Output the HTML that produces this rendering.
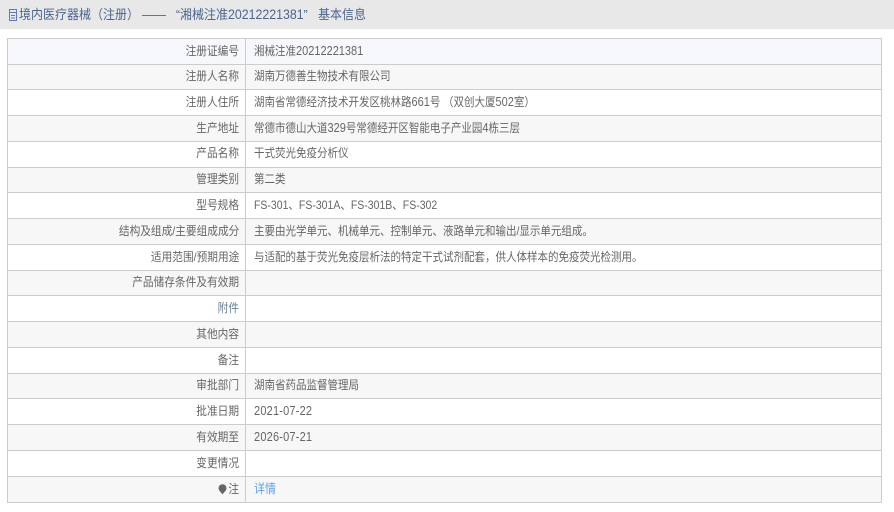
<!DOCTYPE html>
<html lang="zh">
<head>
<meta charset="utf-8">
<style>
html,body{margin:0;padding:0;background:#fff;width:894px;height:512px;overflow:hidden}
body{position:relative;font-family:"Liberation Sans","Noto Sans CJK SC",sans-serif;font-size:12px;color:#666}
#hd{position:absolute;left:0;top:0;width:894px;height:29px;background:#e8e8e8}
.h{position:absolute;top:7px;line-height:16px;white-space:nowrap;color:#4a6590;font-size:13px;transform:scaleX(.923);transform-origin:left center}
#ic{position:absolute;left:8px;top:9px}
.t{position:absolute;white-space:nowrap;line-height:16px}
.k{right:655px;font-size:12px;transform:scaleX(.89);transform-origin:right center}
.v{left:254px;font-size:12px;transform:scaleX(.875);transform-origin:left center}
.n{font-size:12.57px}
.g{position:absolute;left:8px;width:873px;background:#f7f7f7}
.b{position:absolute;left:7px;width:875px;height:1px;background:#ccc}
</style>
</head>
<body>
<div id="hd"></div>
<svg id="ic" width="10" height="12" viewBox="0 0 10 12"><path d="M1.500.500h7v11h-7zM1.500 3.500h7M3 6.500h4M3 9h4" fill="none" stroke="#5f78c0"/></svg>
<div class="h" style="left:19px">境内医疗器械（注册）</div>
<div class="h" style="left:142px">——</div>
<div class="h" style="left:176px">“湘械注准<span style="font-size:13.4px">20212221381</span>”</div>
<div class="h" style="left:318px">基本信息</div>

<div style="position:absolute;left:7px;top:38px;width:875px;height:465px;box-sizing:border-box;border:1px solid #ccc;border-bottom-width:2px;background:#fff"></div>
<div class="g" style="top:39px;height:25px;background:#f6f8fc"></div>
<div class="g" style="top:65px;height:24px"></div>
<div class="g" style="top:116px;height:25px"></div>
<div class="g" style="top:168px;height:24px"></div>
<div class="g" style="top:219px;height:25px"></div>
<div class="g" style="top:271px;height:24px"></div>
<div class="g" style="top:322px;height:25px"></div>
<div class="g" style="top:374px;height:24px"></div>
<div class="g" style="top:425px;height:25px"></div>
<div class="g" style="top:477px;height:25px"></div>

<div style="position:absolute;left:245px;top:38px;width:1px;height:464px;background:#ccc"></div>
<div class="b" style="top:64px"></div>
<div class="b" style="top:89px"></div>
<div class="b" style="top:115px"></div>
<div class="b" style="top:141px"></div>
<div class="b" style="top:167px"></div>
<div class="b" style="top:192px"></div>
<div class="b" style="top:218px"></div>
<div class="b" style="top:244px"></div>
<div class="b" style="top:270px"></div>
<div class="b" style="top:295px"></div>
<div class="b" style="top:321px"></div>
<div class="b" style="top:347px"></div>
<div class="b" style="top:373px"></div>
<div class="b" style="top:398px"></div>
<div class="b" style="top:424px"></div>
<div class="b" style="top:450px"></div>
<div class="b" style="top:476px"></div>

<div class="t k" style="top:43px">注册证编号</div>
<div class="t v" style="top:43px">湘械注准<span class="n">20212221381</span></div>
<div class="t k" style="top:68px">注册人名称</div>
<div class="t v" style="top:68px">湖南万德善生物技术有限公司</div>
<div class="t k" style="top:94px">注册人住所</div>
<div class="t v" style="top:94px">湖南省常德经济技术开发区桃林路<span class="n">661</span>号<span style="margin-left:3px">（</span>双创大厦<span class="n">502</span>室）</div>
<div class="t k" style="top:120px">生产地址</div>
<div class="t v" style="top:120px">常德市德山大道<span class="n">329</span>号常德经开区智能电子产业园<span class="n">4</span>栋三层</div>
<div class="t k" style="top:145px">产品名称</div>
<div class="t v" style="top:145px">干式荧光免疫分析仪</div>
<div class="t k" style="top:171px">管理类别</div>
<div class="t v" style="top:171px">第二类</div>
<div class="t k" style="top:197px">型号规格</div>
<div class="t v" style="top:197px">FS-301、FS-301A、FS-301B、FS-302</div>
<div class="t k" style="top:223px">结构及组成/主要组成成分</div>
<div class="t v" style="top:223px">主要由光学单元、机械单元、控制单元、液路单元和输出/显示单元组成。</div>
<div class="t k" style="top:249px">适用范围/预期用途</div>
<div class="t v" style="top:249px">与适配的基于荧光免疫层析法的特定干式试剂配套，供人体样本的免疫荧光检测用。</div>
<div class="t k" style="top:274px">产品储存条件及有效期</div>
<div class="t k" style="top:300px;color:#6a8098">附件</div>
<div class="t k" style="top:326px">其他内容</div>
<div class="t k" style="top:352px">备注</div>
<div class="t k" style="top:377px">审批部门</div>
<div class="t v" style="top:377px">湖南省药品监督管理局</div>
<div class="t k" style="top:403px">批准日期</div>
<div class="t v" style="top:403px"><span class="n" style="letter-spacing:.23px">2021-07-22</span></div>
<div class="t k" style="top:429px">有效期至</div>
<div class="t v" style="top:429px"><span class="n" style="letter-spacing:.23px">2026-07-21</span></div>
<div class="t k" style="top:455px">变更情况</div>
<svg style="position:absolute;left:218px;top:484px" width="9" height="11" viewBox="0 0 9 11"><path d="M4.500 10.500C3 8 .5 6.500.5 4.200a4 4 0 0 1 8 0C8.500 6.500 6 8 4.500 10.500z" fill="#666"/></svg>
<div class="t k" style="top:481px">注</div>
<div class="t v" style="top:481px;font-size:12.57px;color:#5a9ff0">详情</div>
</body>
</html>
